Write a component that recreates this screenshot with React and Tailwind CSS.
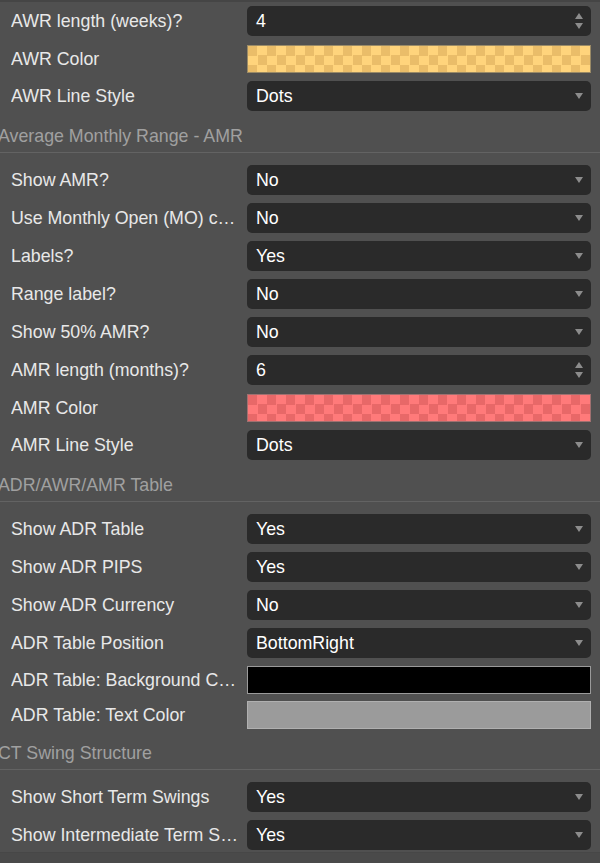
const sections = [
  {
    title: null,
    rows: [
      { label: "AWR length (weeks)?", type: "number", value: "4" },
      { label: "AWR Color", type: "color", color: "yellow", h: "h-[37px]" },
      { label: "AWR Line Style", type: "select", value: "Dots" },
    ],
  },
  {
    title: "Average Monthly Range - AMR",
    rows: [
      { label: "Show AMR?", type: "select", value: "No" },
      { label: "Use Monthly Open (MO) calculation?", type: "select", value: "No" },
      { label: "Labels?", type: "select", value: "Yes" },
      { label: "Range label?", type: "select", value: "No" },
      { label: "Show 50% AMR?", type: "select", value: "No" },
      { label: "AMR length (months)?", type: "number", value: "6" },
      { label: "AMR Color", type: "color", color: "red", h: "h-[37px]" },
      { label: "AMR Line Style", type: "select", value: "Dots" },
    ],
  },
  {
    title: "ADR/AWR/AMR Table",
    rows: [
      { label: "Show ADR Table", type: "select", value: "Yes" },
      { label: "Show ADR PIPS", type: "select", value: "Yes" },
      { label: "Show ADR Currency", type: "select", value: "No" },
      { label: "ADR Table Position", type: "select", value: "BottomRight" },
      { label: "ADR Table: Background Color", type: "color", color: "black", h: "h-[36px]" },
      { label: "ADR Table: Text Color", type: "color", color: "gray", h: "h-[34px]" },
    ],
  },
  {
    title: "CT Swing Structure",
    rows: [
      { label: "Show Short Term Swings", type: "select", value: "Yes" },
      { label: "Show Intermediate Term Swings", type: "select", value: "Yes" },
    ],
  },
];

const swatches = {
  yellow:
    "border-[#9a8a66] bg-[image:repeating-conic-gradient(#ffd47c_0%_25%,#eabd69_0%_50%)] bg-[length:19px_19px]",
  red: "border-[#a07070] bg-[image:repeating-conic-gradient(#ff7a7a_0%_25%,#e86868_0%_50%)] bg-[length:19px_19px]",
  black: "border-[#9a9a9a] bg-black",
  gray: "border-[#b0b0b0] bg-[#9b9b9b]",
};

function Arrow({ up }) {
  return (
    <svg width="8" height="6" viewBox="0 0 8 6" className="block">
      <path d={up ? "M4 0 L8 6 L0 6 Z" : "M0 0 L8 0 L4 6 Z"} fill="#8c8c8c" />
    </svg>
  );
}

function Control({ row }) {
  if (row.type === "color") {
    return <div className={`h-[28px] w-full border ${swatches[row.color]}`} />;
  }
  return (
    <div className="flex h-[30px] w-full items-center justify-between rounded-[5px] bg-[#2a2a2a] pl-[9px] pr-[8px] text-white">
      <span>{row.value}</span>
      {row.type === "number" ? (
        <div className="flex flex-col gap-[4px]">
          <Arrow up />
          <Arrow />
        </div>
      ) : (
        <Arrow />
      )}
    </div>
  );
}

function Row({ row }) {
  return (
    <div className={`flex items-center pl-[11px] pr-[9px] ${row.h || "h-[38px]"}`}>
      <div className="w-[229px] shrink-0 truncate pr-[2px] text-[#e8e8e8]">{row.label}</div>
      <div className="ml-[7px] flex-1">
        <Control row={row} />
      </div>
    </div>
  );
}

export default function App() {
  return (
    <div
      className="flex h-[863px] w-[600px] flex-col overflow-hidden bg-[#505050] text-[17.8px] leading-[20px]"
      style={{ fontFamily: '"Liberation Sans", Arial, sans-serif' }}
    >
      <div className="h-[2px] shrink-0 bg-[#454545]" />
      <div className="flex-1 overflow-hidden">
        {sections.map((section, i) => (
          <div key={i}>
            {section.title && (
              <div className="mb-[8px] border-b border-[#636363] pb-[6px] pt-[11px]">
                <div className="ml-[-2px] whitespace-nowrap text-[#a0a0a0]">{section.title}</div>
              </div>
            )}
            {section.rows.map((row) => (
              <Row key={row.label} row={row} />
            ))}
          </div>
        ))}
      </div>
      <div className="h-[11px] shrink-0 border-t border-[#474747] bg-[#4a4a4a]" />
    </div>
  );
}
